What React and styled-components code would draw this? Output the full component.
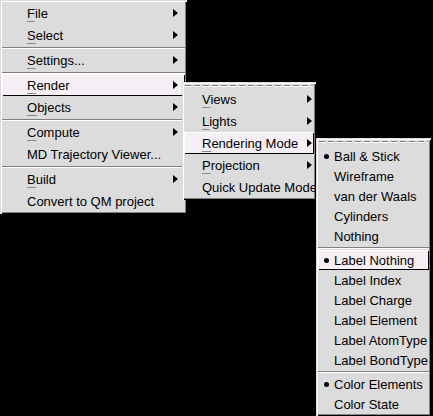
import React from 'react';
import styled, { createGlobalStyle } from 'styled-components';

const GlobalStyle = createGlobalStyle`
  html, body {
    margin: 0;
    padding: 0;
    background: #000;
  }
  body {
    font-family: "Liberation Sans", Arial, sans-serif;
    font-size: 13px;
    color: #000;
  }
`;

const Screen = styled.div`
  position: relative;
  width: 433px;
  height: 416px;
  overflow: hidden;
  background: #000;
`;

// popup menus cascade over each other, so they sit at fixed spots
const Menu = styled.div`
  position: absolute;
  left: ${({ $x }) => $x}px;
  top: ${({ $y }) => $y}px;
  width: ${({ $w }) => $w}px;
  box-sizing: border-box;
  display: flex;
  flex-direction: column;
  padding: 2px;
  background: #dcdcdc;
  box-shadow:
    inset 1px 1px 0 #dcdcdc,
    inset 2px 2px 0 #fff,
    inset -1px -1px 0 #000,
    inset -2px -2px 0 #808080;
`;

const TearOff = styled.div`
  height: ${({ $h }) => $h}px;
  margin: 0 1px;
  position: relative;

  &::before {
    content: '';
    position: absolute;
    left: 0;
    right: 0;
    top: 1px;
    height: 1px;
    background: repeating-linear-gradient(to right, #808080 0 6px, transparent 6px 9px);
  }
  &::after {
    content: '';
    position: absolute;
    left: 0;
    right: 0;
    top: 2px;
    height: 1px;
    background: repeating-linear-gradient(to right, #fff 0 6px, transparent 6px 9px);
  }
`;

const Separator = styled.div`
  height: ${({ $h }) => $h}px;
  display: flex;
  flex-direction: column;
  justify-content: center;

  &::before {
    content: '';
    height: 1px;
    background: #808080;
  }
  &::after {
    content: '';
    height: 1px;
    background: #fff;
  }
`;

const Item = styled.div`
  display: flex;
  align-items: center;
  height: ${({ $h }) => $h}px;
  box-sizing: border-box;
  padding-left: ${({ $indent }) => $indent}px;
  padding-right: ${({ $arrowGap }) => $arrowGap}px;
  white-space: nowrap;
  background: ${({ $active }) => ($active ? '#f6f0f6' : 'transparent')};
  box-shadow: ${({ $active }) =>
    $active ? 'inset 1px 1px 0 #fff, inset -1px -1px 0 #000' : 'none'};
`;

const Check = styled.span`
  width: ${({ $w }) => $w}px;
  flex: none;
  display: flex;
  align-items: center;

  &::before {
    content: '';
    display: ${({ $on }) => ($on ? 'block' : 'none')};
    width: 5px;
    height: 5px;
    border-radius: 50%;
    background: #000;
  }
`;

const Label = styled.span`
  flex: 1;
`;

const Accel = styled.span`
  text-decoration: underline;
  text-decoration-color: #8a8a8a;
  text-underline-offset: 3px;
`;

const Arrow = styled.span`
  width: 0;
  height: 0;
  border-top: 4px solid transparent;
  border-bottom: 4px solid transparent;
  border-left: 5px solid #000;
  flex: none;
`;

function Text({ label, accel }) {
  if (!accel) return <Label>{label}</Label>;
  return (
    <Label>
      <Accel>{label[0]}</Accel>
      {label.slice(1)}
    </Label>
  );
}

const mainItems = [
  { label: 'File', accel: true, sub: true },
  { label: 'Select', accel: true, sub: true },
  { sep: true },
  { label: 'Settings...', accel: true, sub: true },
  { sep: true },
  { label: 'Render', accel: true, sub: true, active: true },
  { label: 'Objects', accel: true, sub: true },
  { sep: true },
  { label: 'Compute', accel: true, sub: true },
  { label: 'MD Trajectory Viewer...' },
  { sep: true },
  { label: 'Build', accel: true, sub: true },
  { label: 'Convert to QM project' },
];

const renderItems = [
  { label: 'Views', accel: true, sub: true },
  { label: 'Lights', accel: true, sub: true },
  { label: 'Rendering Mode', accel: true, sub: true, active: true },
  { label: 'Projection', accel: true, sub: true },
  { label: 'Quick Update Mode' },
];

const modeItems = [
  { label: 'Ball & Stick', on: true },
  { label: 'Wireframe' },
  { label: 'van der Waals' },
  { label: 'Cylinders' },
  { label: 'Nothing' },
  { sep: true },
  { label: 'Label Nothing', on: true, active: true },
  { label: 'Label Index' },
  { label: 'Label Charge' },
  { label: 'Label Element' },
  { label: 'Label AtomType' },
  { label: 'Label BondType' },
  { sep: true },
  { label: 'Color Elements', on: true },
  { label: 'Color State' },
];

function PopupMenu({
  x,
  y,
  w,
  items,
  itemHeight,
  sepHeight,
  indent,
  arrowGap,
  tearOff,
  checks,
}) {
  return (
    <Menu $x={x} $y={y} $w={w}>
      {tearOff && <TearOff $h={tearOff} />}
      {items.map((it, i) =>
        it.sep ? (
          <Separator key={i} $h={sepHeight} />
        ) : (
          <Item
            key={i}
            $h={itemHeight}
            $indent={checks ? 6 : indent}
            $arrowGap={arrowGap}
            $active={it.active}
          >
            {checks && <Check $w={indent - 6} $on={it.on} />}
            <Text label={it.label} accel={it.accel} />
            {it.sub && <Arrow />}
          </Item>
        )
      )}
    </Menu>
  );
}

export default function App() {
  return (
    <>
      <GlobalStyle />
      <Screen>
        <PopupMenu
          x={0}
          y={0}
          w={187}
          items={mainItems}
          itemHeight={22}
          sepHeight={3}
          indent={25}
          arrowGap={7}
        />
        <PopupMenu
          x={182}
          y={82}
          w={134}
          items={renderItems}
          itemHeight={22}
          indent={18}
          arrowGap={2}
          tearOff={4}
        />
        <PopupMenu
          x={316}
          y={138}
          w={115}
          items={modeItems}
          itemHeight={20}
          sepHeight={4}
          indent={16}
          arrowGap={2}
          tearOff={6}
          checks
        />
      </Screen>
    </>
  );
}
